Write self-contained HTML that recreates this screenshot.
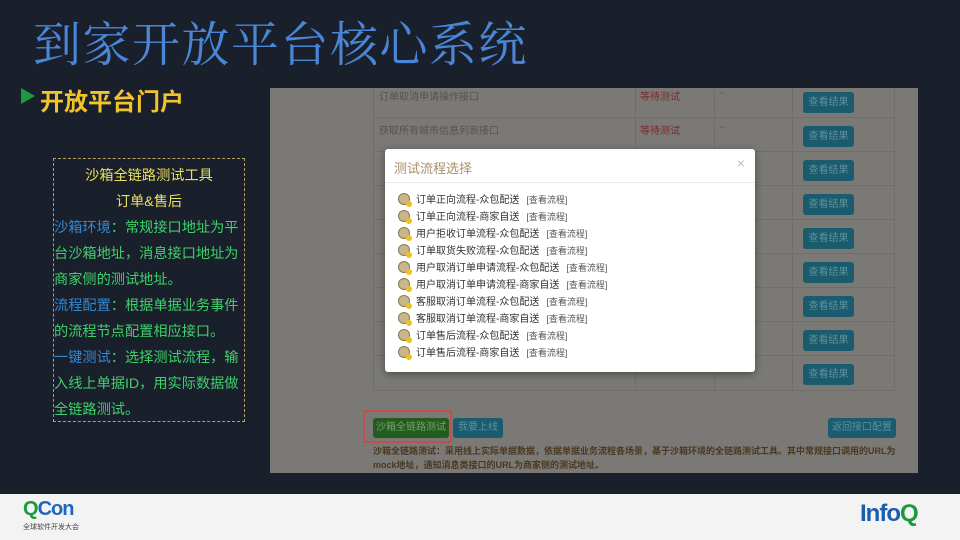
<!DOCTYPE html>
<html><head><meta charset="utf-8"><style>
*{margin:0;padding:0;box-sizing:border-box}
body{width:960px;height:540px;overflow:hidden;background:#1a1f2c;font-family:"Liberation Sans","Noto Sans CJK SC",sans-serif;position:relative}
.abs{position:absolute}
.title{left:33px;top:6px;font-size:48px;color:#4a86d6;font-family:"Liberation Serif","Noto Serif CJK SC",serif;letter-spacing:1.5px;white-space:nowrap}
.sub{left:40px;top:82px;font-size:24px;font-weight:bold;color:#f2c42c}
.tri{left:21px;top:88px;width:0;height:0;border-left:14px solid #1c9a3a;border-top:8px solid transparent;border-bottom:8px solid transparent}
.box{left:53px;top:158px;width:192px;height:264px;border:1px dashed #b8a060;font-size:14.2px;line-height:26px;color:#3ed16a;padding:4px 0 0 0;word-break:break-all}
.box .c{text-align:center;color:#e8e060}
.box b{font-weight:normal;color:#2f8ad6}
.shot{left:270px;top:88px;width:648px;height:385px;background:#7a7976;overflow:hidden}
.tbl{left:103px;top:-5px;width:522px;height:308px;border:1px solid #6f6e6b}
.vl{position:absolute;top:0;bottom:0;width:1px;background:#6f6e6b}
.hl{position:absolute;left:0;right:0;height:1px;background:#6f6e6b}
.btn{position:absolute;width:51px;height:21px;background:#1a5c6e;border-radius:3px;color:#5f909c;font-size:10px;text-align:center;line-height:21px}
.rt{position:absolute;font-size:10px;color:#55534f}
.modal{left:115px;top:61px;width:370px;height:223px;background:#fff;border-radius:3px;box-shadow:0 2px 8px rgba(0,0,0,.4)}
.mh{height:34px;border-bottom:1px solid #e8e8e8;font-size:13px;color:#a89068;padding:9px 0 0 9px}
.x{position:absolute;right:10px;top:6px;color:#bbb;font-size:14px}
.it{position:absolute;left:13px;font-size:10px;color:#333;white-space:nowrap;line-height:14px}
.ic{display:inline-block;width:12px;height:12px;border-radius:50%;background:#c9b78a;border:1px solid #8a7a50;vertical-align:-2px;margin-right:6px;position:relative}
.ic:after{content:"";position:absolute;right:-3px;bottom:-3px;width:6px;height:6px;border-radius:50%;background:#f0c020}
.lk{color:#555;font-size:9px;margin-left:7px}
.foot{left:0;top:494px;width:960px;height:46px;background:#f3f3f3}
</style></head><body>
<div class="abs title">到家开放平台核心系统</div>
<div class="abs tri"></div>
<div class="abs sub">开放平台门户</div>
<div class="abs box">
<div class="c">沙箱全链路测试工具</div>
<div class="c">订单&amp;售后</div>
<div><b>沙箱环境</b>：常规接口地址为平台沙箱地址，消息接口地址为商家侧的测试地址。</div>
<div><b>流程配置</b>：根据单据业务事件的流程节点配置相应接口。</div>
<div><b>一键测试</b>：选择测试流程，输入线上单据ID，用实际数据做全链路测试。</div>
</div>
<div class="abs shot">
 <div class="abs tbl">
  <div class="vl" style="left:261px"></div><div class="vl" style="left:340px"></div><div class="vl" style="left:418px"></div>
  <div class="hl" style="top:33px"></div><div class="hl" style="top:67px"></div><div class="hl" style="top:101px"></div><div class="hl" style="top:135px"></div><div class="hl" style="top:169px"></div><div class="hl" style="top:203px"></div><div class="hl" style="top:237px"></div><div class="hl" style="top:271px"></div>
  <div class="rt" style="left:5px;top:4px">订单取消申请操作接口</div>
  <div class="rt" style="left:5px;top:38px">获取所有城市信息列表接口</div>
  <div class="rt" style="left:266px;top:4px;color:#7a2a2a">等待测试</div>
  <div class="rt" style="left:266px;top:38px;color:#7a2a2a">等待测试</div>
  <div class="rt" style="left:345px;top:4px">--</div><div class="rt" style="left:345px;top:38px">--</div>
  <div class="btn" style="left:429px;top:8px">查看结果</div>
  <div class="btn" style="left:429px;top:42px">查看结果</div>
  <div class="btn" style="left:429px;top:76px">查看结果</div>
  <div class="btn" style="left:429px;top:110px">查看结果</div>
  <div class="btn" style="left:429px;top:144px">查看结果</div>
  <div class="btn" style="left:429px;top:178px">查看结果</div>
  <div class="btn" style="left:429px;top:212px">查看结果</div>
  <div class="btn" style="left:429px;top:246px">查看结果</div>
  <div class="btn" style="left:429px;top:280px">查看结果</div>
 </div>
 <div class="abs" style="left:93px;top:322px;width:89px;height:33px;border:2px solid #c0504a"></div>
 <div class="btn" style="left:103px;top:330px;width:76px;height:20px;background:#245c20;color:#76a06c;line-height:20px">沙箱全链路测试</div>
 <div class="btn" style="left:183px;top:330px;width:50px;height:20px;line-height:20px">我要上线</div>
 <div class="btn" style="left:558px;top:330px;width:68px;height:20px;line-height:20px">返回接口配置</div>
 <div class="abs" style="left:103px;top:356px;width:525px;font-size:9px;line-height:14px;color:#4a3820;font-weight:bold">沙箱全链路测试：采用线上实际单据数据，依据单据业务流程各场景，基于沙箱环境的全链路测试工具。其中常规接口调用的URL为mock地址，通知消息类接口的URL为商家侧的测试地址。</div>
 <div class="abs modal">
  <div class="mh">测试流程选择</div><div class="x">×</div>
  <div class="it" style="top:44px"><span class="ic"></span>订单正向流程-众包配送<span class="lk">[查看流程]</span></div>
  <div class="it" style="top:61px"><span class="ic"></span>订单正向流程-商家自送<span class="lk">[查看流程]</span></div>
  <div class="it" style="top:78px"><span class="ic"></span>用户拒收订单流程-众包配送<span class="lk">[查看流程]</span></div>
  <div class="it" style="top:95px"><span class="ic"></span>订单取货失败流程-众包配送<span class="lk">[查看流程]</span></div>
  <div class="it" style="top:112px"><span class="ic"></span>用户取消订单申请流程-众包配送<span class="lk">[查看流程]</span></div>
  <div class="it" style="top:129px"><span class="ic"></span>用户取消订单申请流程-商家自送<span class="lk">[查看流程]</span></div>
  <div class="it" style="top:146px"><span class="ic"></span>客服取消订单流程-众包配送<span class="lk">[查看流程]</span></div>
  <div class="it" style="top:163px"><span class="ic"></span>客服取消订单流程-商家自送<span class="lk">[查看流程]</span></div>
  <div class="it" style="top:180px"><span class="ic"></span>订单售后流程-众包配送<span class="lk">[查看流程]</span></div>
  <div class="it" style="top:197px"><span class="ic"></span>订单售后流程-商家自送<span class="lk">[查看流程]</span></div>
 </div>
</div>
<div class="abs foot">
 <div class="abs" style="left:23px;top:4px;font-size:20px;font-weight:bold;color:#1a9a3a;letter-spacing:-1px">Q<span style="color:#1a6ab8">Con</span></div>
 <div class="abs" style="left:23px;top:28px;font-size:7px;color:#444">全球软件开发大会</div>
 <div class="abs" style="left:860px;top:6px;font-size:24px;font-weight:bold;color:#1a5fae;letter-spacing:-1px">Info<span style="color:#1a9a3a">Q</span></div>
</div>
</body></html>
